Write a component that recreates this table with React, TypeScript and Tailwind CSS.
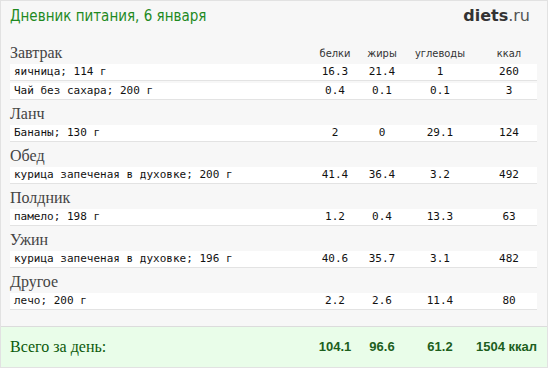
import React from "react";

type Item = { name: string; p: string; f: string; c: string; k: string };
type Meal = { title: string; items: Item[] };

const meals: Meal[] = [
  {
    title: "Завтрак",
    items: [
      { name: "яичница; 114 г", p: "16.3", f: "21.4", c: "1", k: "260" },
      { name: "Чай без сахара; 200 г", p: "0.4", f: "0.1", c: "0.1", k: "3" },
    ],
  },
  { title: "Ланч", items: [{ name: "Бананы; 130 г", p: "2", f: "0", c: "29.1", k: "124" }] },
  {
    title: "Обед",
    items: [{ name: "курица запеченая в духовке; 200 г", p: "41.4", f: "36.4", c: "3.2", k: "492" }],
  },
  { title: "Полдник", items: [{ name: "памело; 198 г", p: "1.2", f: "0.4", c: "13.3", k: "63" }] },
  {
    title: "Ужин",
    items: [{ name: "курица запеченая в духовке; 196 г", p: "40.6", f: "35.7", c: "3.1", k: "482" }],
  },
  { title: "Другое", items: [{ name: "лечо; 200 г", p: "2.2", f: "2.6", c: "11.4", k: "80" }] },
];

const grid = "grid grid-cols-[1fr_46px_48px_68px_63px]";
const serif = "font-['Liberation_Serif',serif]";
const mono = "font-['DejaVu_Sans_Mono',monospace]";
const sans = "font-['DejaVu_Sans_Condensed','DejaVu_Sans',sans-serif]";

function Row({ item }: { item: Item }) {
  return (
    <div
      className={`${grid} ${mono} h-[17px] items-center bg-white border-b border-[#e3e3e3] text-[11px] text-[#111] ml-[9px] mr-[10px] pl-[4px]`}
    >
      <span>{item.name}</span>
      <span className="text-center">{item.p}</span>
      <span className="text-center">{item.f}</span>
      <span className="text-center">{item.c}</span>
      <span className="text-center pl-[7px]">{item.k}</span>
    </div>
  );
}

export default function App() {
  return (
    <div className="w-[550px] h-[368px] bg-white">
      <div className="w-[548px] h-[368px] bg-[#f7f7f7] border border-[#e2e2e2] flex flex-col">
        <div className="flex justify-between items-start h-[38px] px-[9px] pt-[5px]">
          <h1 className={`${sans} text-[15px] leading-[20px] text-[#1f8a1f]`}>
            Дневник питания, 6 января
          </h1>
          <div className="font-['DejaVu_Sans',sans-serif] text-[16px] leading-[20px] text-[#333] mr-[8px]">
            <span className="font-bold">diets</span>
            <span className="text-[#555]">.ru</span>
          </div>
        </div>

        {meals.map((meal, i) => (
          <div key={meal.title} className="flex flex-col gap-[2px]">
            <div className={`${grid} h-[25px] items-end ml-[9px] mr-[10px] -mb-[2px] pb-[2px]`}>
              <span className={`${serif} text-[16px] leading-[18px] text-[#444]`}>{meal.title}</span>
              {i === 0 && (
                <>
                  <span className={`${sans} text-center text-[11px] leading-[16px] text-[#333]`}>белки</span>
                  <span className={`${sans} text-center text-[11px] leading-[16px] text-[#333]`}>жиры</span>
                  <span className={`${sans} text-center text-[11px] leading-[16px] text-[#333]`}>углеводы</span>
                  <span className={`${sans} text-center pl-[7px] text-[11px] leading-[16px] text-[#333]`}>ккал</span>
                </>
              )}
            </div>
            {meal.items.map((it) => (
              <Row key={it.name} item={it} />
            ))}
          </div>
        ))}

        <div
          className={`${grid} mt-auto h-[41px] items-center bg-[#e9fde9] border-t border-[#dcdcdc] pl-[9px] pr-[10px]`}
        >
          <span className={`${serif} text-[16px] text-[#0b5a0b]`}>Всего за день:</span>
          <span className="text-center font-['Liberation_Sans',sans-serif] font-bold text-[13px] text-[#1d5f1d]">104.1</span>
          <span className="text-center font-['Liberation_Sans',sans-serif] font-bold text-[13px] text-[#1d5f1d]">96.6</span>
          <span className="text-center font-['Liberation_Sans',sans-serif] font-bold text-[13px] text-[#1d5f1d]">61.2</span>
          <span className="text-right font-['Liberation_Sans',sans-serif] font-bold text-[13px] text-[#1d5f1d]">1504 ккал</span>
        </div>
      </div>
    </div>
  );
}
